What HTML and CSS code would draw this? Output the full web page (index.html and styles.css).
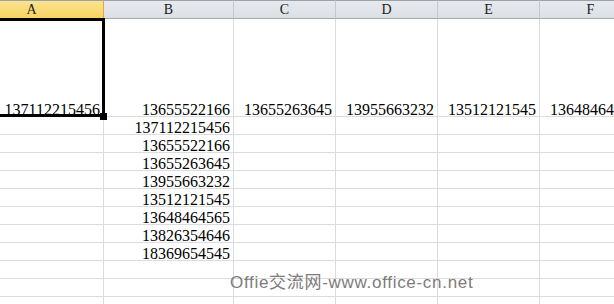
FILE: index.html
```html
<!DOCTYPE html>
<html>
<head>
<meta charset="utf-8">
<link rel="stylesheet" href="styles.css">
</head>
<body>
<div class="sheet">
  <div class="grid">
    <div class="hd sel">A</div>
    <div class="hd">B</div>
    <div class="hd">C</div>
    <div class="hd">D</div>
    <div class="hd">E</div>
    <div class="hd">F</div>

    <div class="c">137112215456</div>
    <div class="c">13655522166</div>
    <div class="c">13655263645</div>
    <div class="c">13955663232</div>
    <div class="c">13512121545</div>
    <div class="c">13648464565</div>

    <div class="c"></div><div class="c">137112215456</div><div class="c"></div><div class="c"></div><div class="c"></div><div class="c"></div>
    <div class="c"></div><div class="c">13655522166</div><div class="c"></div><div class="c"></div><div class="c"></div><div class="c"></div>
    <div class="c"></div><div class="c">13655263645</div><div class="c"></div><div class="c"></div><div class="c"></div><div class="c"></div>
    <div class="c"></div><div class="c">13955663232</div><div class="c"></div><div class="c"></div><div class="c"></div><div class="c"></div>
    <div class="c"></div><div class="c">13512121545</div><div class="c"></div><div class="c"></div><div class="c"></div><div class="c"></div>
    <div class="c"></div><div class="c">13648464565</div><div class="c"></div><div class="c"></div><div class="c"></div><div class="c"></div>
    <div class="c"></div><div class="c">13826354646</div><div class="c"></div><div class="c"></div><div class="c"></div><div class="c"></div>
    <div class="c"></div><div class="c">18369654545</div><div class="c"></div><div class="c"></div><div class="c"></div><div class="c"></div>
    <div class="c"></div><div class="c"></div><div class="c"></div><div class="c"></div><div class="c"></div><div class="c"></div>
    <div class="c"></div><div class="c"></div><div class="c"></div><div class="c"></div><div class="c"></div><div class="c"></div>
    <div class="c"></div><div class="c"></div><div class="c"></div><div class="c"></div><div class="c"></div><div class="c"></div>
  </div>
  <div class="selection"></div>
  <div class="handle"></div>
  <div class="watermark">Offie交流网-www.office-cn.net</div>
</div>
</body>
</html>
```

FILE: styles.css
```css
html, body {
  margin: 0;
  padding: 0;
  background: #ffffff;
}

.sheet {
  position: relative;
  width: 614px;
  height: 304px;
  overflow: hidden;
}

.grid {
  display: grid;
  margin-left: -40px;
  grid-template-columns: 144px 130px 102px 102px 102px 102px;
  grid-template-rows: 19px 98px repeat(11, 18px);
  font-family: "Liberation Serif", "Times New Roman", serif;
  font-size: 16px;
  color: #000;
}

.hd {
  box-sizing: border-box;
  border-top: 1px solid #9da2a8;
  border-bottom: 1px solid #a5a9ae;
  border-right: 1px solid #c4c8cd;
  background: linear-gradient(#e6e9ed, #dcdfe4);
  display: flex;
  align-items: center;
  justify-content: center;
  font-size: 14px;
  line-height: 12px;
  padding-top: 1px;
  color: #222;
}

.hd.sel {
  background: linear-gradient(#fbe48e, #f7d363);
  border-right-color: #e2a740;
  border-bottom-color: #e2a740;
}

.c {
  box-sizing: border-box;
  border-right: 1px solid #dadcdd;
  border-bottom: 1px solid #dadcdd;
  display: flex;
  align-items: flex-end;
  justify-content: flex-end;
  padding-right: 3px;
  line-height: 12px;
  white-space: nowrap;
}

.selection {
  position: absolute;
  left: -10px;
  top: 18px;
  width: 115px;
  height: 99px;
  box-sizing: border-box;
  border: 3px solid #000;
}

.handle {
  position: absolute;
  left: 100px;
  top: 113px;
  width: 7px;
  height: 7px;
  background: #000;
}

.watermark {
  position: absolute;
  left: 230px;
  top: 273px;
  font-family: "Liberation Sans", "Noto Sans CJK SC", sans-serif;
  font-size: 17px;
  line-height: 20px;
  letter-spacing: 0.7px;
  color: #7c7c7c;
  white-space: nowrap;
}
```
